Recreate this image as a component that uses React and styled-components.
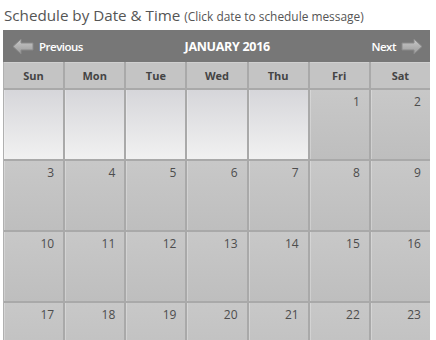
import React from "react";
import styled, { createGlobalStyle } from "styled-components";

const Global = createGlobalStyle`
  html, body { margin: 0; padding: 0; background: #fff; }
  body { font-family: "Open Sans", "Liberation Sans", sans-serif; }
`;

const Page = styled.div`
  padding: 0 6px 0 3px;
`;

const Title = styled.div`
  height: 30px;
  display: flex;
  align-items: center;
  padding-left: 1px;
  color: #555;
  font-size: 15.2px;
  white-space: nowrap;
`;

const Sub = styled.span`
  font-size: 11.9px;
  margin-left: 4px;
  padding-top: 2px;
`;

const Header = styled.div`
  height: 32px;
  background: #777;
  display: flex;
  justify-content: space-between;
  align-items: center;
  color: #fff;
  padding: 0 7px 0 9px;
`;

const NavButton = styled.div`
  display: flex;
  align-items: center;
  gap: 5px;
  font-size: 11.5px;
  font-weight: 600;
  letter-spacing: -0.5px;
`;

const Month = styled.div`
  font-size: 12.5px;
  font-weight: 700;
  letter-spacing: -0.3px;
`;

const Grid = styled.div`
  display: grid;
  grid-template-columns: repeat(7, 1fr);
  gap: 2px;
  background: #a9a9a9;
  border-left: 1px solid #b0b0b0;
`;

const DayName = styled.div`
  height: 26px;
  background: #c4c4c4;
  display: flex;
  align-items: center;
  justify-content: center;
  font-size: 11px;
  font-weight: 700;
  color: #444;
  border-top: 1px solid #d0d0d0;
  box-sizing: border-box;
`;

const Cell = styled.div`
  height: 69px;
  background: ${(p) =>
    p.$empty
      ? "linear-gradient(#d6d6da, #f1f1f1)"
      : "linear-gradient(#c8c8c8, #bebebe)"};
  box-shadow: inset 1px 0 0 rgba(255, 255, 255, 0.25);
  display: flex;
  justify-content: flex-end;
  align-items: flex-start;
  padding: 3px 9px 0 0;
  box-sizing: border-box;
  font-size: 12px;
  color: #4d4d4d;
`;

const Arrow = ({ dir }) => (
  <svg width="22" height="17" viewBox="0 0 22 17">
    <defs>
      <linearGradient id={`g${dir}`} x1="0" y1="0" x2="0" y2="1">
        <stop offset="0" stopColor="#c9c9c9" />
        <stop offset="1" stopColor="#9a9a9a" />
      </linearGradient>
    </defs>
    <g transform={dir === "left" ? "" : "translate(22 0) scale(-1 1)"}>
      <path
        d="M1 8.5 L9 1 L9 5 L21 5 L21 12 L9 12 L9 16 Z"
        fill={`url(#g${dir})`}
        stroke="#8a8a8a"
        strokeWidth="1"
        strokeLinejoin="round"
      />
    </g>
  </svg>
);

const days = ["Sun", "Mon", "Tue", "Wed", "Thu", "Fri", "Sat"];

export default function App() {
  const cells = [];
  for (let i = 0; i < 5; i++) cells.push(null);
  for (let d = 1; d <= 23; d++) cells.push(d);
  return (
    <Page>
      <Global />
      <Title>
        Schedule by Date &amp; Time<Sub>(Click date to schedule message)</Sub>
      </Title>
      <Header>
        <NavButton>
          <Arrow dir="left" />
          Previous
        </NavButton>
        <Month>JANUARY 2016</Month>
        <NavButton>
          Next
          <Arrow dir="right" />
        </NavButton>
      </Header>
      <Grid>
        {days.map((d) => (
          <DayName key={d}>{d}</DayName>
        ))}
        {cells.map((d, i) => (
          <Cell key={i} $empty={d === null}>
            {d}
          </Cell>
        ))}
      </Grid>
    </Page>
  );
}
